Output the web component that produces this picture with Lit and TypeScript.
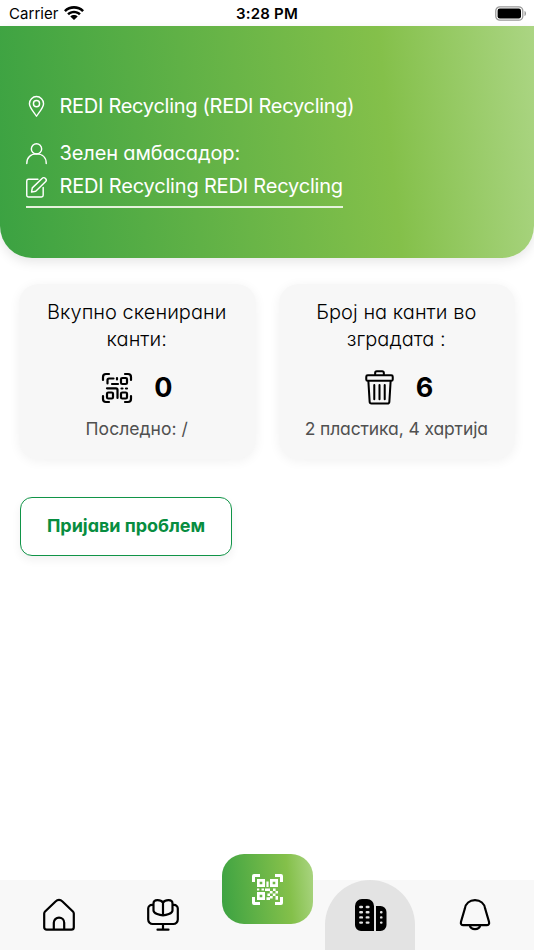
import { LitElement, html, svg, css } from "lit";
import { customElement } from "lit/decorators.js";

const pin = svg`<svg class="info-icon" viewBox="0 0 22 22"><path d="M11 21.200C8.600 17.400 3.600 12 3.600 8a7.400 7.400 0 0 1 14.800 0c0 4-5 9.400-7.400 13.200Z"/><circle cx="11" cy="8" r="3.200"/></svg>`;
const person = svg`<svg class="info-icon" viewBox="0 0 22 22"><circle cx="11" cy="6.200" r="5.400"/><path d="M.8 21.500c0-6.200 4-10.100 10.200-10.100s10.200 3.900 10.200 10.100"/></svg>`;
const edit = svg`<svg class="info-icon" viewBox="0 0 22 22"><path d="M12.500 2.400H2.600A1.800 1.800 0 0 0 .8 4.200v15A1.800 1.800 0 0 0 2.600 21h13.600a1.800 1.800 0 0 0 1.800-1.800V11"/><path d="m5.800 15.800.8-4.400L16.800 1.500a2.500 2.500 0 0 1 3.600 3.600L10.200 15 5.800 15.800Z"/></svg>`;

const scan = svg`<svg class="scan" viewBox="0 0 32 32"><path d="M2 8V5a3 3 0 0 1 3-3h3M24 2h3a3 3 0 0 1 3 3v3M30 24v3a3 3 0 0 1-3 3h-3M8 30H5a3 3 0 0 1-3-3v-3M6.500 11.500V8a1.500 1.500 0 0 1 1.500-1.500h4.500M16 6v1.500M11 12h6M6 16.300h9a1.500 1.500 0 0 1 1.500 1.500V26M20.500 16.500h1M25 16.500h1"/><rect x="20" y="6" width="6" height="6" rx="1.300"/><rect x="6" y="20.500" width="6" height="6" rx="1.300"/><rect x="20" y="20.500" width="6" height="6" rx="1.300"/></svg>`;
const trash = svg`<svg class="trash" viewBox="0 0 30 36"><path d="M10.500 5V3A1.700 1.700 0 0 1 12.200 1.300h5.600A1.700 1.700 0 0 1 19.500 3v2"/><rect x="1.300" y="5.300" width="27.400" height="5.800" rx="1.500"/><path d="m3.500 11.500 1.300 21.200a2 2 0 0 0 2 1.900h16.400a2 2 0 0 0 2-1.900L26.500 11.500M9.600 15.500v14.700M15 15.500v14.700M20.400 15.500v14.700"/></svg>`;

const home = svg`<svg class="line" viewBox="0 0 32 32"><path d="M1.200 14.500a3 3 0 0 1 .9-2L12.800 2.300a4.500 4.500 0 0 1 6.400 0L29.900 12.500a3 3 0 0 1 .9 2v13.700a2.500 2.500 0 0 1-2.500 2.500H3.700a2.500 2.500 0 0 1-2.500-2.500ZM10.800 30.500v-6.700a5.200 5.200 0 0 1 10.400 0v6.700"/></svg>`;
const tree = svg`<svg class="line" viewBox="0 0 32 32"><path d="M6.500 5.800H5a3.800 3.800 0 0 0-3.800 3.800v10.900A4.500 4.500 0 0 0 5.700 25h20.600a4.500 4.500 0 0 0 4.500-4.500V9.600A3.800 3.800 0 0 0 27 5.800h-1.500M16 25v5M10.500 30.700h11M16 3.500v12.800M16 3.500C13.700.400 6.500-.200 6.500 4.500v7c0 3.200 6.500 4.800 9.500 4.800s9.500-1.600 9.500-4.800v-7C25.500-.200 18.300.400 16 3.500Z"/></svg>`;
const building = svg`<svg class="solid" viewBox="0 0 32 32"><path d="M0 7a7 7 0 0 1 7-7h5a7 7 0 0 1 7 7v25H6a6 6 0 0 1-6-6ZM21 7h4.500a6 6 0 0 1 6 6v13a6 6 0 0 1-6 6H21Z"/><path class="panes" d="M5.300 8h1.600M11.800 8h1.600M5.300 13.200h1.600M11.800 13.200h1.600M5.300 18.400h1.600M11.800 18.400h1.600M5.300 23.600h1.600M11.800 23.600h1.600M26.100 13.200h.3M26.100 18.400h.3M26.100 23.600h.3"/></svg>`;
const bell = svg`<svg class="line" viewBox="0 0 32 32"><path d="M16 1.200c-5.500 0-9.400 3.500-10.200 8.600L2 22.800c-.6 2.200.6 3.400 2.300 3.400h23.400c1.700 0 2.900-1.200 2.300-3.400L26.200 9.800C25.400 4.700 21.500 1.200 16 1.200ZM10.800 26.500a5.300 4.500 0 0 0 10.400 0"/></svg>`;
const qr = svg`<svg class="qr" viewBox="0 0 31 31"><path d="M0 2a2 2 0 0 1 2-2h6v3H3v5H0ZM23 0h6a2 2 0 0 1 2 2v6h-3V3h-5ZM0 23h3v5h5v3H2a2 2 0 0 1-2-2ZM28 23h3v6a2 2 0 0 1-2 2h-6v-3h5Z"/><path fill-rule="evenodd" d="M5 5h8v8H5ZM7.700 7.700v2.600h2.600V7.700ZM18 5h8v8h-8ZM20.700 7.700v2.600h2.600V7.700ZM5 18h8v8H5ZM7.700 20.700v2.600h2.600v-2.600Z"/><path d="M14.400 7.500h2.200V13h-2.200ZM5 14.600h2.300v2H5ZM9.500 14.600h2.500v2H9.500ZM13 14.400h5v2.500h2.600v2.600H18V22h-2.600v-2.600h2.400v-2.500H13ZM21 14.400h2.600V17H21ZM23.500 17H26v2.600h-2.500ZM20.800 19.500h2.700V22h-2.700ZM23.500 22H26v3.800h-2.500ZM14.500 23.200H18V22h2.700v2.500H18V26h-3.500Z"/></svg>`;

@customElement("app-root")
class AppRoot extends LitElement {
  static styles = css`
    :host { display: flex; flex-direction: column; height: 950px; background: #fff; color: #101010; overflow: hidden; font-family: Inter, "Noto Sans", sans-serif; font-feature-settings: "cv11"; }
    * { box-sizing: border-box; }
    svg { display: block; flex: none; overflow: visible; fill: none; stroke: currentColor; stroke-linecap: round; stroke-linejoin: round; }
    .status { height: 26px; flex: none; display: grid; grid-template-columns: 1fr auto 1fr; align-items: center; padding: 1px 7px 0 9px; font-size: 15px; font-feature-settings: normal; color: #000; }
    .carrier { display: flex; align-items: center; gap: 6px; letter-spacing: .05px; }
    .wifi { width: 20px; height: 14px; fill: #000; stroke: none; margin: -1px 0 0 -1px; }
    .time { font-weight: 600; letter-spacing: .2px; margin-right: 2px; }
    .battery { width: 32px; height: 15px; justify-self: end; stroke: none; margin-top: -1px; }
    .hero { height: 232px; flex: none; border-radius: 0 0 32px 32px; color: #fff; padding: 65.500px 26px 0; display: flex; flex-direction: column; align-items: flex-start; font-size: 20px; background: linear-gradient(84deg, #3ba242 0%, #84c04a 72%, #abd583 100%); box-shadow: 0 4px 12px rgba(0,0,0,.1); }
    .info { display: flex; align-items: center; gap: 12.500px; height: 28px; white-space: nowrap; }
    .info-icon { width: 21px; height: 21px; stroke-width: 1.500; margin-top: 2px; }
    .ambassador { margin-top: 19px; }
    .editable { height: 36px; margin-top: 5.500px; padding-bottom: 6px; border-bottom: 2px solid #e5f2dc; }
    .place { letter-spacing: -.28px; }
    .role { letter-spacing: -.13px; }
    .name { letter-spacing: -.19px; }
    .cards { display: grid; grid-template-columns: 1fr 1fr; gap: 23px; padding: 26px 19px 0 19px; }
    .card { height: 175px; border-radius: 20px; background: #f7f7f7; box-shadow: 0 2px 12px rgba(0,0,0,.06); display: flex; flex-direction: column; align-items: center; padding: 15px 1px 0 0; text-align: center; }
    .title { font-size: 20px; line-height: 27px; font-weight: 300; white-space: nowrap; letter-spacing: .04px; color: #000; }
    .metric { display: flex; align-items: center; height: 40px; margin-top: 14.500px; gap: 21px; font-size: 27px; font-weight: 700; color: #000; }
    .value { position: relative; top: -.500px; }
    .scan { width: 32px; height: 32px; stroke-width: 2.200; }
    .trash { width: 29px; height: 35px; stroke-width: 2.100; }
    .bins { gap: 21.500px; padding-left: 6px; }
    .note { font-size: 17.500px; line-height: 24px; color: #505050; margin-top: 9.500px; white-space: nowrap; letter-spacing: .05px; }
    .kinds { letter-spacing: -.12px; }
    .report { width: 212px; height: 59px; margin: 38px 0 0 20px; padding: 0 0 3px; border: 1.500px solid #109447; border-radius: 12px; background: #fff; color: #078d40; font: inherit; font-feature-settings: inherit; font-size: 18px; font-weight: 700; white-space: nowrap; letter-spacing: -.04px; box-shadow: 0 4px 10px rgba(0,0,0,.06); }
    .tabs { height: 70px; flex: none; margin-top: auto; background: #f8f8f8; display: grid; grid-template-columns: 117px 92px 116px 90px 119px; color: #000; }
    .tab { display: flex; justify-content: center; align-items: center; }
    .active { background: #e3e3e3; border-radius: 45px 45px 0 0; }
    .line { width: 32px; height: 32px; stroke-width: 2.200; }
    .solid { width: 32px; height: 32px; fill: #000; stroke: none; }
    .active .solid { margin-left: 2px; }
    .panes { stroke: #e3e3e3; stroke-width: 2.400; }
    .qr { width: 31px; height: 31px; fill: #fff; stroke: none; }
    .capture { width: 91px; height: 70px; margin: -26px 0 0 0; justify-self: center; border-radius: 22px; color: #fff; background: linear-gradient(84deg, #3ba242 0%, #84c04a 72%, #abd583 100%); }
  `;

  render() {
    return html`
      <div class="status">
        <div class="carrier"><span>Carrier</span>
          <svg class="wifi" viewBox="0 0 20 14"><path d="M0 4.200C5.500-1.300 14.500-1.300 20 4.200L18.200 6C13.700 1.700 6.300 1.700 1.800 6ZM3.200 7.500c3.800-3.600 9.800-3.600 13.600 0L15 9.300c-2.800-2.600-7.200-2.600-10 0ZM6.300 10.500c2.100-1.900 5.300-1.900 7.400 0L10 14Z"/></svg>
        </div>
        <div class="time">3:28 PM</div>
        <svg class="battery" viewBox="0 0 32 15"><rect x=".8" y=".8" width="27" height="13.400" rx="4" stroke="#999" stroke-width="1.300"/><rect x="2.600" y="2.600" width="23.400" height="9.800" rx="2.200" fill="#000"/><path d="M29.500 5c2 .6 2 4.400 0 5Z" fill="#999"/></svg>
      </div>
      <header class="hero">
        <div class="info">${pin}<span class="place">REDI Recycling (REDI Recycling)</span></div>
        <div class="info ambassador">${person}<span class="role">Зелен амбасадор:</span></div>
        <div class="info editable">${edit}<span class="name">REDI Recycling REDI Recycling</span></div>
      </header>
      <section class="cards">
        <article class="card">
          <div class="title">Вкупно скенирани<br>канти:</div>
          <div class="metric">${scan}<span class="value">0</span></div>
          <div class="note">Последно: /</div>
        </article>
        <article class="card">
          <div class="title">Број на канти во<br>зградата :</div>
          <div class="metric bins">${trash}<span class="value">6</span></div>
          <div class="note kinds">2 пластика, 4 хартија</div>
        </article>
      </section>
      <button class="report">Пријави проблем</button>
      <nav class="tabs">
        <div class="tab">${home}</div>
        <div class="tab">${tree}</div>
        <div class="tab capture">${qr}</div>
        <div class="tab active">${building}</div>
        <div class="tab">${bell}</div>
      </nav>`;
  }
}
